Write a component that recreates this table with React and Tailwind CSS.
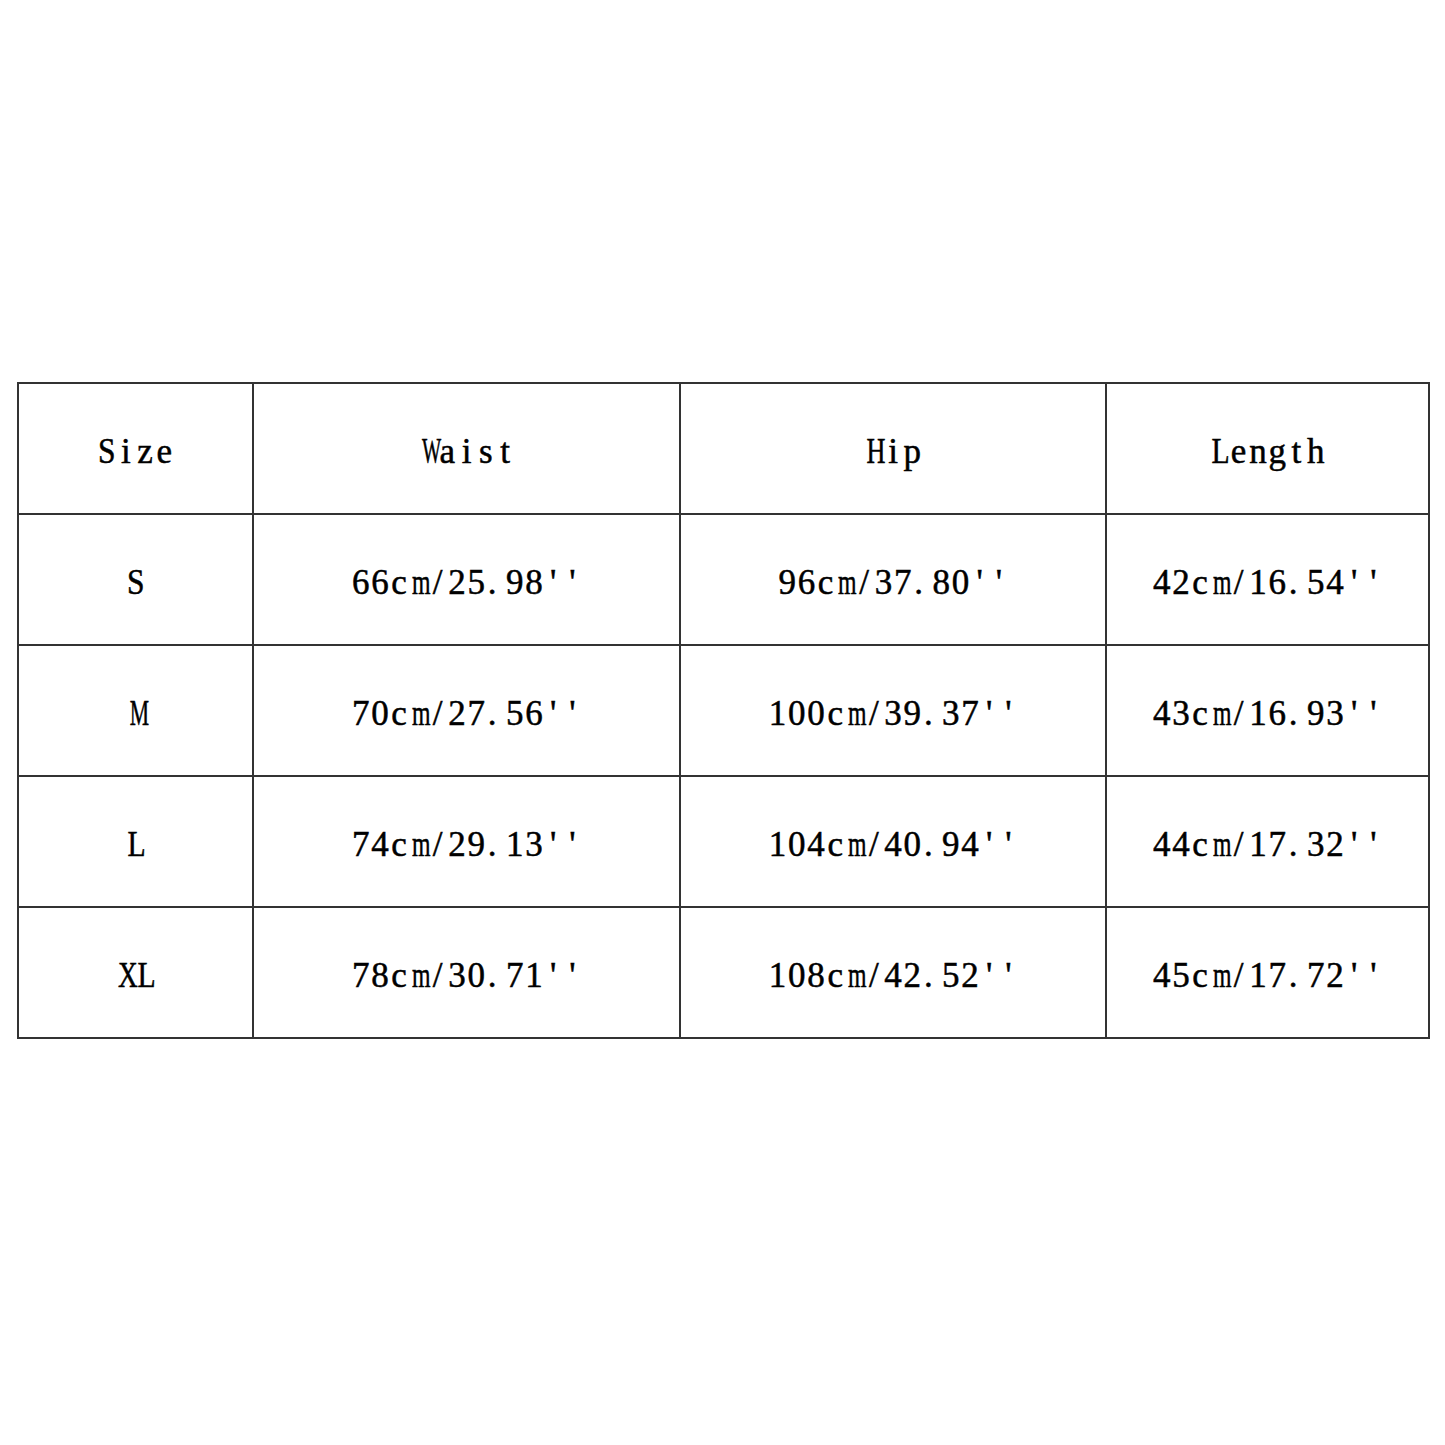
const squeeze = {
  W: "scale-x-[0.58]",
  M: "scale-x-[0.62]",
  m: "scale-x-[0.68]",
  L: "scale-x-[0.85]",
  X: "scale-x-[0.78]",
  H: "scale-x-[0.75]",
  S: "scale-x-[0.9]",
  ".": "text-left pl-[2px]",
};

function Mono({ text }) {
  return (
    <span className="flex">
      {text.split("").map((ch, k) => (
        <span
          key={k}
          className={"inline-block w-[19.25px] text-center " + (squeeze[ch] || "")}
        >
          {ch}
        </span>
      ))}
    </span>
  );
}

export default function App() {
  const header = ["Size", "Waist", "Hip", "Length"];
  const rows = [
    ["S", "66cm/25.98''", "96cm/37.80''", "42cm/16.54''"],
    ["M", "70cm/27.56''", "100cm/39.37''", "43cm/16.93''"],
    ["L", "74cm/29.13''", "104cm/40.94''", "44cm/17.32''"],
    ["XL", "78cm/30.71''", "108cm/42.52''", "45cm/17.72''"],
  ];
  const all = [header, ...rows];
  return (
    <div className="min-h-[1445px] w-[1445px] bg-white pt-[382px] pl-[17px]">
      <div
        className="grid grid-cols-[235px_427px_426px_323px] border-l-2 border-t-2 border-[#333] w-fit"
        style={{ fontFamily: '"Liberation Serif", "Times New Roman", serif' }}
      >
        {all.map((r, i) =>
          r.map((c, j) => (
            <div
              key={i + "-" + j}
              className="h-[131px] border-r-2 border-b-2 border-[#333] flex items-center justify-center text-[35px] leading-none text-black [-webkit-text-stroke:0.5px_#000] pt-[6px]"
            >
              <Mono text={c} />
            </div>
          ))
        )}
      </div>
    </div>
  );
}
